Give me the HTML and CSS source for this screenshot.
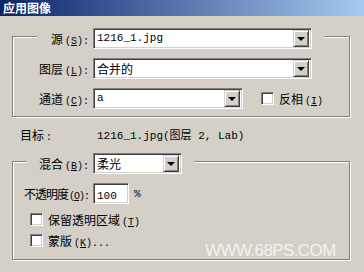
FILE: index.html
```html
<!DOCTYPE html>
<html lang="zh-CN">
<head>
<meta charset="UTF-8"/>
<title>应用图像</title>
<link rel="stylesheet" href="styles.css">
</head>
<body>

<div class="titlebar">应用图像</div>

<div class="dialog">
  <fieldset class="group group-src">
    <legend>
      <div class="row">
        <label class="lbl">源<span class="key">(<u>S</u>):</span></label>
        <div class="combo combo-wide"><span class="val mono">1216_1.jpg</span><span class="drop"></span></div>
      </div>
    </legend>
    <div class="row">
      <label class="lbl">图层<span class="key">(<u>L</u>):</span></label>
      <div class="combo combo-wide"><span class="val">合并的</span><span class="drop"></span></div>
    </div>
    <div class="row">
      <label class="lbl">通道<span class="key">(<u>C</u>):</span></label>
      <div class="combo combo-mid"><span class="val mono">a</span><span class="drop"></span></div>
      <span class="check check-invert"></span>
      <span class="check-text">反相<span class="key">(<u>I</u>)</span></span>
    </div>
  </fieldset>

  <div class="target">
    <span class="target-lbl">目标<span class="key">:</span></span>
    <span class="mono">1216_1.jpg(图层 2, Lab)</span>
  </div>

  <fieldset class="group group-blend">
    <legend>
      <div class="row">
        <label class="lbl">混合<span class="key">(<u>B</u>):</span></label>
        <div class="combo combo-small"><span class="val">柔光</span><span class="drop"></span></div>
      </div>
    </legend>
    <div class="row row-opacity">
      <label class="lbl">不透明度<span class="key">(<u>O</u>):</span></label>
      <div class="field"><span class="mono">100</span></div>
      <span class="unit mono">%</span>
    </div>
    <div class="check-row">
      <span class="check"></span>
      <span class="check-text">保留透明区域<span class="key">(<u>T</u>)</span></span>
    </div>
    <div class="check-row">
      <span class="check"></span>
      <span class="check-text">蒙版<span class="key">(<u>K</u>)...</span></span>
    </div>
  </fieldset>

  <div class="watermark">WWW.68PS.COM</div>
</div>

</body>
</html>
```

FILE: styles.css
```css
body {
  margin:0; width:364px; height:272px; overflow:hidden;
  background:#d4d0c8; color:#000;
  font-family:"Noto Sans CJK SC", sans-serif; font-size:12px;
}
u { text-decoration:underline; }
.mono { font-family:"Liberation Mono", "Noto Sans CJK SC", monospace; font-size:11px; }
.key { font-family:"Liberation Mono", monospace; font-size:10px; margin-left:2px; }

.titlebar {
  height:16px; line-height:16px; padding-left:3px;
  background:linear-gradient(to right, #0a246a, #a6caf0);
  color:#fff; font-weight:bold; font-size:12px;
}

.dialog { position:relative; height:256px; }

/* etched group boxes */
.group {
  margin:8px 14px 0 12px; padding:0;
  border:1px solid #808080;
  box-shadow:1px 1px 0 #fff, inset 1px 1px 0 #fff;
  min-width:0;
}
.group legend { padding:4px 0 0; background:#d4d0c8; }
.group-src { padding-bottom:7px; }
.group-src legend { margin-left:24px; width:287px; }
.group-src legend .lbl { width:52px; }
.group-blend { margin-top:7px; padding-bottom:11px; }
.group-blend legend { margin-left:13px; width:168px; }
.group-blend legend .lbl { width:63px; }

.row { display:flex; align-items:center; height:21px; }
.group > .row { margin-top:9px; }
.lbl { width:76px; flex:none; text-align:right; padding-right:4px; white-space:nowrap; }
.row-opacity .lbl { letter-spacing:-1px; }
.row-opacity .key { margin-left:1px; }

/* sunken controls */
.combo, .field, .check {
  box-sizing:border-box; background:#fff;
  border:1px solid; border-color:#808080 #fff #fff #808080;
  box-shadow:inset 1px 1px 0 #404040, inset -1px -1px 0 #d4d0c8;
}
.combo { display:flex; align-items:center; height:21px; padding:2px; }
.combo-wide { width:219px; }
.combo-mid { width:150px; }
.combo-small { width:89px; }
.val { flex:1; padding-left:1px; line-height:17px; white-space:nowrap; }
.drop {
  width:16px; height:17px; box-sizing:border-box;
  display:flex; align-items:center; justify-content:center;
  background:#d4d0c8;
  border:1px solid; border-color:#d4d0c8 #404040 #404040 #d4d0c8;
  box-shadow:inset 1px 1px 0 #fff, inset -1px -1px 0 #808080;
}
.drop::after {
  content:""; border-top:4px solid #000;
  border-left:4px solid transparent; border-right:4px solid transparent;
  margin-top:1px;
}

.field { width:36px; height:21px; padding:0 3px; line-height:19px; }
.unit { margin-left:5px; }

.check { width:13px; height:13px; flex:none; }
.check-invert { margin-left:18px; }
.check-text { margin-left:5px; white-space:nowrap; }

.target { display:flex; align-items:center; height:16px; margin-top:9px; }
.target-lbl { width:77px; padding-left:20px; }

.check-row { display:flex; align-items:center; height:16px; margin-top:5px; padding-left:17px; }
.row-opacity + .check-row { margin-top:7px; }

.watermark {
  position:absolute; left:205px; top:217px;
  font-family:"Liberation Sans", Arial, sans-serif; font-size:17px;
  letter-spacing:-0.6px; color:#f2f2f2;
}
```
